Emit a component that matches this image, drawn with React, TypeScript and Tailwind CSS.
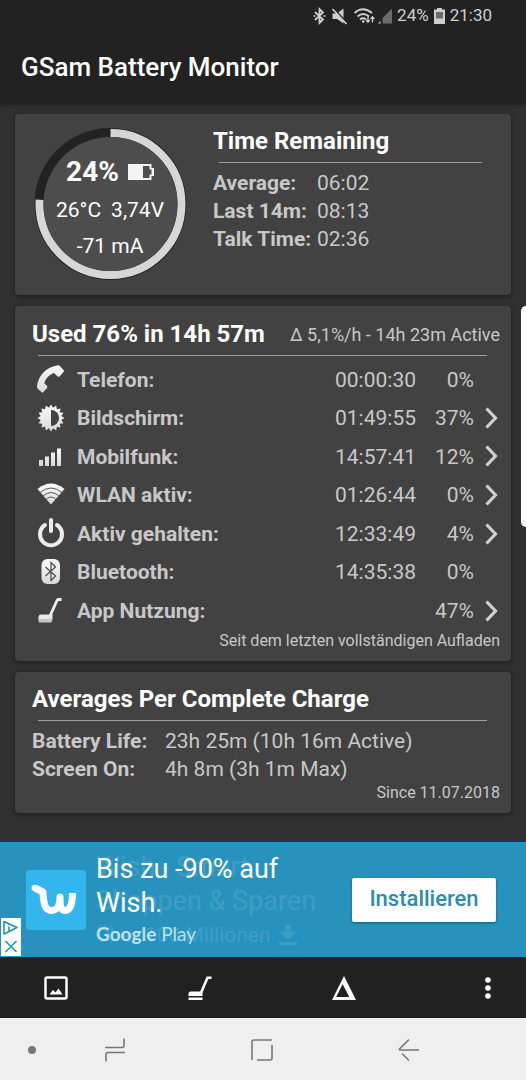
import type { ReactNode } from 'react';

type UsageRow = {
  label: string;
  time?: string;
  percent: string;
  icon: ReactNode;
  details?: boolean;
};

const starPoints = Array.from({ length: 32 }, (_, i) => {
  const r = i % 2 === 0 ? 13.5 : 10.5;
  const a = (i * Math.PI) / 16 - Math.PI / 2;
  return `${(14 + r * Math.cos(a)).toFixed(2)},${(14 + r * Math.sin(a)).toFixed(2)}`;
}).join(' ');

const PhoneIcon = () => (
  <svg viewBox="0 0 28 28" className="block size-7">
    <path fill="url(#shine)" d="M20 .5C21.5 0 22.5 .5 23.3 1.5L26.6 5Q27.5 6 26.5 7L22.8 11.2Q21.6 12.4 20.4 11.2L17 8C12 10 8 14 7.4 18.5L9.8 20.6Q11 21.8 10 23L6.5 27Q5.4 28 4.3 27L1 24Q0 23 0 21.5C1 11 9 2 20 .5Z" />
  </svg>
);

const ScreenIcon = () => (
  <svg viewBox="0 0 28 28" className="block size-7">
    <polygon fill="url(#shine)" points={starPoints} />
    <path fill="#424242" d="M14 6a8 8 0 0 1 0 16Z" />
  </svg>
);

const SignalIcon = () => (
  <svg viewBox="0 0 28 28" className="block size-7">
    <path fill="url(#shine)" d="M2 18h4v6H2ZM8 14.5h4V24H8ZM14 10.5h4V24h-4ZM20 6.5h4V24h-4Z" />
  </svg>
);

const WifiIcon = () => (
  <svg viewBox="0 0 28 28" className="block size-7">
    <path fill="url(#shine)" d="M.5 8Q14 -3 27.5 8L14 23.5Z" />
    <g fill="none" stroke="#5a5a5a" strokeWidth="1">
      <path d="M3 11.5Q14 2.5 25 11.5" />
      <path d="M6 15Q14 8 22 15" />
      <path d="M9 18.5Q14 13.5 19 18.5" />
    </g>
  </svg>
);

const PowerIcon = () => (
  <svg viewBox="0 0 28 28" className="block size-7 overflow-visible" fill="none" stroke="#ececec" strokeLinecap="round" strokeWidth="4">
    <path d="M8 5A11 11 0 1 0 20 5" />
    <path d="M14 0V11" />
  </svg>
);

const BluetoothIcon = () => (
  <svg viewBox="0 0 28 28" className="block size-7">
    <rect x="4.5" y="1" width="18.5" height="25" rx="6" fill="url(#shine)" />
    <path d="M8.5 9L18.5 18L14 22.5V4.5L18.5 9L8.5 18" fill="none" stroke="#4a4a4a" strokeWidth="1.2" />
  </svg>
);

const SweepIcon = () => (
  <svg viewBox="0 0 28 28" className="block size-7">
    <path d="M24.5 2.5H21.5Q20.5 2.5 20 3.5L13 19" fill="none" stroke="#f0f0f0" strokeWidth="2.8" />
    <path d="M4 17.5H15.5V23H1.5V20Q1.5 17.5 4 17.5Z" fill="#e8e8e8" />
    <path d="M1.5 22H15V24.5Q15 25.5 14 25.5H2.5Q1.5 25.5 1.5 24.5Z" fill="#c4c4c4" />
  </svg>
);

const usage: UsageRow[] = [
  { label: 'Telefon:', time: '00:00:30', percent: '0%', icon: <PhoneIcon /> },
  { label: 'Bildschirm:', time: '01:49:55', percent: '37%', icon: <ScreenIcon />, details: true },
  { label: 'Mobilfunk:', time: '14:57:41', percent: '12%', icon: <SignalIcon />, details: true },
  { label: 'WLAN aktiv:', time: '01:26:44', percent: '0%', icon: <WifiIcon />, details: true },
  { label: 'Aktiv gehalten:', time: '12:33:49', percent: '4%', icon: <PowerIcon />, details: true },
  { label: 'Bluetooth:', time: '14:35:38', percent: '0%', icon: <BluetoothIcon /> },
  { label: 'App Nutzung:', percent: '47%', icon: <SweepIcon />, details: true },
];

const remaining = [
  ['Average:', '06:02'],
  ['Last 14m:', '08:13'],
  ['Talk Time:', '02:36'],
];

const averages = [
  ['Battery Life:', '23h 25m (10h 16m Active)'],
  ['Screen On:', '4h 8m (3h 1m Max)'],
];

function StatusBar() {
  return (
    <div className="flex h-8 items-center justify-end pr-[34px] text-[17px] text-[#cfcfcf]">
      <svg viewBox="0 0 80 18" className="mr-1 h-[18px] w-20">
        <path d="M2 5L10 12.5L6.5 16V2L10 5.5L2 13" fill="none" stroke="#cfcfcf" strokeWidth="1.8" />
        <circle cx="1.5" cy="9" r="1" fill="#cfcfcf" />
        <circle cx="11.5" cy="9" r="1" fill="#cfcfcf" />
        <path d="M19.5 6.5H24L30.5 1.5V16.5L24 12H19.5Z" fill="#cfcfcf" />
        <path d="M19.5 .5L33.5 15.5" stroke="#222" strokeWidth="2" />
        <path d="M19.5 2L33.5 17" stroke="#cfcfcf" strokeWidth="1.8" />
        <g fill="none" stroke="#cfcfcf" strokeWidth="1.8">
          <path d="M41.5 6Q50 -1.5 59 6" />
          <path d="M44.5 9.5Q50 4.5 56 9.5" />
          <path d="M47 12.5Q50 10 53 12.5" />
        </g>
        <circle cx="50.2" cy="14.5" r="1.3" fill="#cfcfcf" />
        <path d="M55 9.5V15M53.2 13L55 15.2L56.8 13M59.5 15.5V10M57.7 12L59.5 9.8L61.3 12" fill="none" stroke="#cfcfcf" strokeWidth="1.3" />
        <path d="M65 16.5L67.5 14V16.5Z" fill="#cfcfcf" />
        <path d="M69.5 16.5V11L79 1.5V16.5Z" fill="#6b6b6b" />
      </svg>
      <span>24%</span>
      <svg viewBox="0 0 11 16" className="mx-[5px] h-4 w-[11px]">
        <path d="M3 0H8V1.5H11V16H0V1.5H3Z" fill="#cfcfcf" />
        <path d="M2 4H9V10.5H2Z" fill="#6b6b6b" />
      </svg>
      <span>21:30</span>
    </div>
  );
}

function Card({ children }: { children: ReactNode }) {
  return (
    <section className="rounded-sm bg-[#424242] pt-[13px] pr-[11px] pb-[10px] pl-[17px] shadow-[0_1px_4px_rgba(0,0,0,0.5)]">
      {children}
    </section>
  );
}

function BatteryRing() {
  return (
    <div className="relative size-[154px] shrink-0">
      <svg viewBox="0 0 154 154" className="size-full">
        <circle cx="76.5" cy="77" r="76" fill="#222" />
        <circle
          cx="76.5"
          cy="77"
          r="71"
          fill="none"
          stroke="#d6d6d6"
          strokeWidth="8"
          pathLength="100"
          strokeDasharray="76 24"
          transform="rotate(-90 76.5 77)"
        />
        <circle cx="76.5" cy="77" r="67" fill="#4d4d4d" />
      </svg>
      <div className="absolute inset-0 flex flex-col items-center pt-[27px] pr-[2px] text-[21px] text-white">
        <div className="flex h-9 items-center gap-[9px] text-[28px] font-bold">
          24%
          <svg viewBox="0 0 26 16" className="h-4 w-[26px]">
            <path d="M0 0H23.5V4H26V12H23.5V16H0Z" fill="#f4f4f4" />
            <path d="M15 2H21.5V5.5H23.5V10.5H21.5V14H15Z" fill="#4d4d4d" />
          </svg>
        </div>
        <div className="flex h-[42px] items-center gap-[10px]">
          <span>26°C</span>
          <span>3,74V</span>
        </div>
        <div className="leading-7">-71 mA</div>
      </div>
    </div>
  );
}

function AdBanner() {
  return (
    <aside className="relative flex h-[115px] items-center bg-[#2892be] pr-[30px] pl-[26px]">
      <svg viewBox="0 0 60 60" className="size-[60px] shrink-0">
        <rect width="60" height="60" rx="4" fill="#33b5ee" />
        <path
          d="M9 18L17 22C17.5 34 19 40.5 25.5 40.5C31 40.5 34 35 34 27C34 36 35 40.5 39 40.5C44 40.5 46.5 34 46.5 23"
          fill="none"
          stroke="#fff"
          strokeWidth="7"
          strokeLinejoin="round"
        />
        <circle cx="8.5" cy="18" r="3" fill="#fff" />
      </svg>
      <div className="relative ml-[10px] min-w-0 flex-1 self-stretch pt-[10px]">
        {/* previous slide, fading out */}
        <div className="absolute inset-x-0 top-2 text-[27px] leading-[34px] whitespace-nowrap text-white/10">
          <p>Wish - Smart</p>
          <p>Shoppen &amp; Sparen</p>
          <p className="flex items-center gap-2 text-[21px]">
            Über 100 Millionen
            <svg viewBox="0 0 18 20" className="h-5 w-[18px]" fill="currentColor">
              <path d="M6 0H12V7H17L9 15L1 7H6ZM0 17H18V20H0Z" />
            </svg>
          </p>
        </div>
        <p className="relative text-[27px] leading-[34px] text-white">
          Bis zu -90% auf
          <br />
          Wish.
        </p>
        <p className="relative font-['Lato',sans-serif] text-[19px] leading-7 text-[#b9e2f3]">
          <span className="font-bold">Google</span> Play
        </p>
      </div>
      <button className="h-11 w-36 shrink-0 rounded-xs bg-white pb-[2px] text-[22px] font-medium text-[#2f8bb0] shadow-[0_1px_3px_rgba(0,0,0,0.4)]">
        Installieren
      </button>
      <div className="absolute bottom-px left-px flex flex-col bg-white">
        <button aria-label="AdChoices" className="h-[19px] w-5">
          <svg viewBox="0 0 20 19" className="size-full" fill="none" stroke="#1795a5" strokeWidth="1.5">
            <path d="M3 3.5L16 9.5L3 16Z" strokeLinejoin="round" />
            <path d="M8 8.5V13M8 6V7.3" />
          </svg>
        </button>
        <button aria-label="Schließen" className="h-[19px] w-5">
          <svg viewBox="0 0 20 19" className="size-full" fill="none" stroke="#1795a5" strokeWidth="1.5">
            <path d="M4.5 4L15.5 15M15.5 4L4.5 15" />
          </svg>
        </button>
      </div>
    </aside>
  );
}

function Toolbar() {
  const button = 'flex size-12 items-center justify-center';
  return (
    <nav className="flex h-[61px] items-center justify-between bg-[#212121] pr-[14px] pl-8">
      <button aria-label="Bild" className={button}>
        <svg viewBox="0 0 24 24" className="size-6">
          <rect x="1.5" y="1.5" width="21" height="21" rx="1.5" fill="none" stroke="#fff" strokeWidth="2.5" />
          <path d="M5.5 18.5L9 14L11.5 16.5L14.5 12.5L18.5 18.5Z" fill="#fff" />
        </svg>
      </button>
      <button aria-label="App Nutzung" className={button}>
        <svg viewBox="0 0 24 24" className="size-6">
          <path d="M23.5 1.8H19.5L12.5 18" fill="none" stroke="#fff" strokeWidth="2.6" />
          <path d="M3 15.5H14.5V20H.5V18Q.5 15.5 3 15.5ZM.5 21.5H14.5V24H.5Z" fill="#fff" />
        </svg>
      </button>
      <button aria-label="Delta" className={button}>
        <svg viewBox="0 0 24 24" className="size-6">
          <path d="M12 0L24 24H0ZM10.6 8L4.2 21H17.3Z" fill="#fff" fillRule="evenodd" />
        </svg>
      </button>
      <button aria-label="Mehr" className={button}>
        <svg viewBox="0 0 24 24" className="size-6" fill="#fff">
          <circle cx="12" cy="4" r="2.8" />
          <circle cx="12" cy="12" r="2.8" />
          <circle cx="12" cy="20" r="2.8" />
        </svg>
      </button>
    </nav>
  );
}

function SystemNav() {
  const button = 'flex size-12 items-center justify-center';
  return (
    <nav className="flex h-[62px] items-center bg-[#efefef] pt-[2px]">
      <button aria-label="Leiste ausblenden" className="flex h-12 w-16 items-center justify-center">
        <span className="size-2 rounded-full bg-[#777]" />
      </button>
      <div className="flex flex-1 justify-between pr-[93px] pl-[27px]">
        <button aria-label="Letzte Apps" className={button}>
          <svg viewBox="0 0 22 24" className="h-6 w-[22px]" fill="none" stroke="#777" strokeWidth="1.6">
            <path d="M20 .5V7.5Q20 9.5 18 9.5H1M21 14.5H4Q2 14.5 2 16.5V23.5" />
          </svg>
        </button>
        <button aria-label="Startseite" className={button}>
          <svg viewBox="0 0 22 22" className="size-[22px]" fill="none" stroke="#777" strokeWidth="1.6">
            <path d="M1 21V3Q1 1 3 1H21M21 6V19Q21 21 19 21H6" />
          </svg>
        </button>
        <button aria-label="Zurück" className={button}>
          <svg viewBox="0 0 22 24" className="h-6 w-[22px]" fill="none" stroke="#777" strokeWidth="1.6">
            <path d="M11 1.5L1.5 11Q1 12 2 12H21M4 15.5L11 22.5" />
          </svg>
        </button>
      </div>
    </nav>
  );
}

export default function App() {
  return (
    <div className="relative flex min-h-screen flex-col bg-[#303030] font-['Roboto',sans-serif]">
      <svg className="absolute size-0" aria-hidden="true">
        <defs>
          <linearGradient id="shine" x1="0" y1="0" x2="0" y2="1">
            <stop offset="0" stopColor="#fafafa" />
            <stop offset="1" stopColor="#d8d8d8" />
          </linearGradient>
        </defs>
      </svg>

      <header className="h-[103px] bg-[#222] shadow-[0_1px_4px_rgba(0,0,0,0.6)]">
        <StatusBar />
        <h1 className="pl-[21px] text-[26px] leading-[70px] font-medium text-white">GSam Battery Monitor</h1>
      </header>

      <main className="flex flex-1 flex-col gap-[11px] px-[15px] pt-[11px] pb-7 text-[21px] text-[#c8c8c8]">
        <Card>
          <div className="flex gap-[25px] pb-1 pl-[2px]">
            <BatteryRing />
            <div className="flex-1">
              <h2 className="text-2xl leading-7 font-bold text-white">Time Remaining</h2>
              <hr className="mt-[7px] mr-[18px] mb-[6px] ml-[6px] border-[#a0a0a0]" />
              <dl className="grid grid-cols-[104px_1fr] leading-7">
                {remaining.map(([label, value]) => (
                  <div key={label} className="contents">
                    <dt className="font-bold whitespace-nowrap">{label}</dt>
                    <dd>{value}</dd>
                  </div>
                ))}
              </dl>
            </div>
          </div>
        </Card>

        <Card>
          <div className="flex items-center justify-between">
            <h2 className="text-2xl leading-7 font-bold whitespace-nowrap text-white">Used 76% in 14h 57m</h2>
            <span className="pt-[2px] text-lg leading-7 whitespace-nowrap">Δ 5,1%/h - 14h 23m Active</span>
          </div>
          <hr className="mt-[6px] mr-[13px] mb-[5px] ml-[6px] border-[#a0a0a0]" />
          <table className="h-[270px] w-full">
            <tbody>
              {usage.map(row => (
                <tr key={row.label}>
                  <td className="w-[45px] pb-[2px] pl-[5px]">{row.icon}</td>
                  <th scope="row" className="text-left font-bold">{row.label}</th>
                  <td className="text-right">{row.time}</td>
                  <td className="w-[58px] text-right">{row.percent}</td>
                  <td className="w-[26px] pb-[2px] pl-[11px]">
                    {row.details && (
                      <button aria-label={`${row.label} Details`} className="block">
                        <svg viewBox="0 0 13 22" className="h-[22px] w-[13px]">
                          <path d="M1.5 1.5L10.5 11L1.5 20.5" fill="none" stroke="#d0d0d0" strokeWidth="3.2" />
                        </svg>
                      </button>
                    )}
                  </td>
                </tr>
              ))}
            </tbody>
          </table>
          <p className="text-right text-base leading-5">Seit dem letzten vollständigen Aufladen</p>
        </Card>

        <Card>
          <h2 className="text-2xl leading-7 font-bold text-white">Averages Per Complete Charge</h2>
          <hr className="mt-[7px] mr-[13px] mb-[6px] ml-[6px] border-[#a0a0a0]" />
          <dl className="grid grid-cols-[133px_1fr] leading-7">
            {averages.map(([label, value]) => (
              <div key={label} className="contents">
                <dt className="font-bold whitespace-nowrap">{label}</dt>
                <dd>{value}</dd>
              </div>
            ))}
          </dl>
          <p className="text-right text-base leading-5">Since 11.07.2018</p>
        </Card>
      </main>

      <AdBanner />
      <Toolbar />
      <SystemNav />

      {/* edge panel handle */}
      <div className="absolute top-[306px] right-0 h-[221px] w-[5px] rounded-l-md bg-white" />
    </div>
  );
}
